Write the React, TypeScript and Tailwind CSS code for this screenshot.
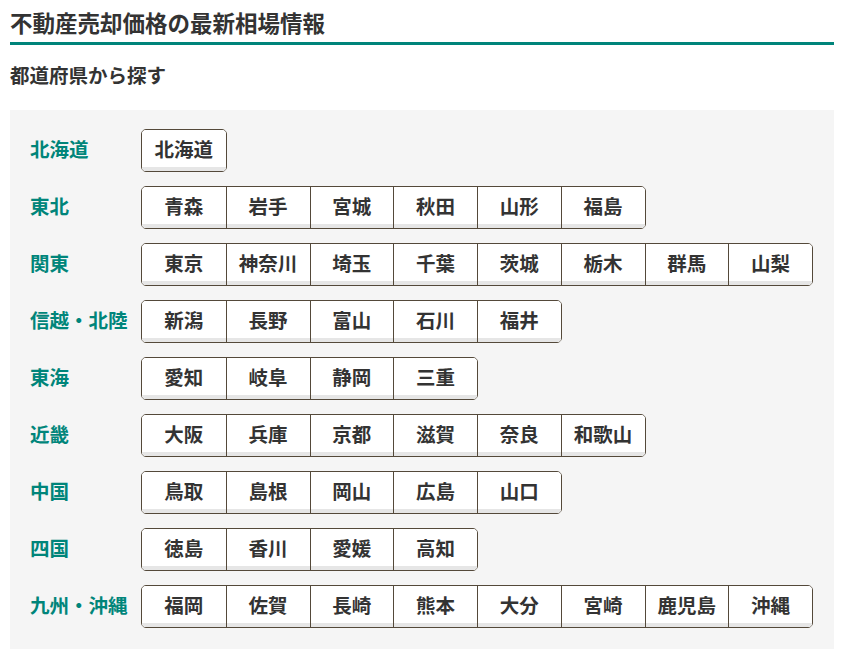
const REGIONS: { name: string; prefs: string[] }[] = [
  { name: "北海道", prefs: ["北海道"] },
  { name: "東北", prefs: ["青森", "岩手", "宮城", "秋田", "山形", "福島"] },
  { name: "関東", prefs: ["東京", "神奈川", "埼玉", "千葉", "茨城", "栃木", "群馬", "山梨"] },
  { name: "信越・北陸", prefs: ["新潟", "長野", "富山", "石川", "福井"] },
  { name: "東海", prefs: ["愛知", "岐阜", "静岡", "三重"] },
  { name: "近畿", prefs: ["大阪", "兵庫", "京都", "滋賀", "奈良", "和歌山"] },
  { name: "中国", prefs: ["鳥取", "島根", "岡山", "広島", "山口"] },
  { name: "四国", prefs: ["徳島", "香川", "愛媛", "高知"] },
  { name: "九州・沖縄", prefs: ["福岡", "佐賀", "長崎", "熊本", "大分", "宮崎", "鹿児島", "沖縄"] },
];

// ─── Component ────────────────────────────────────────────────

export default function App() {
  return (
    <div
      className="w-[846px] h-[649px] overflow-hidden bg-white text-[#333]"
      style={{ fontFamily: '"Noto Sans CJK JP", "Noto Sans", sans-serif' }}
    >
      <div className="pl-[10px] pr-[12px] pt-[7px]">
        {/* ── Title ─────────────────────────────────── */}
        <h1 className="text-[22.5px] leading-[31px] font-bold pb-[4px] border-b-[3px] border-[#00847a]">
          不動産売却価格の最新相場情報
        </h1>

        <h2 className="mt-[18px] text-[19.5px] leading-[24px] font-bold">都道府県から探す</h2>

        {/* ── Region list ───────────────────────────── */}
        <div className="mt-[23px] bg-[#f5f5f5] px-[20px] pt-[19px] pb-[30px] flex flex-col gap-[14px]">
          {REGIONS.map((r) => (
            <div key={r.name} className="flex items-center">
              <div className="w-[111px] pb-[3px] text-[19.5px] font-bold text-[#00857a] leading-none">{r.name}</div>
              <div className="flex border border-[#54493a] rounded-[5px] overflow-hidden bg-white">
                {r.prefs.map((p, i) => (
                  <a
                    key={p}
                    href="#"
                    className={`w-[83.75px] h-[41px] flex items-center justify-center pb-[4px] text-[19.5px] font-bold text-[#333] bg-white shadow-[inset_0_-4px_0_#e6e6e6] ${
                      i > 0 ? "border-l border-[#54493a]" : ""
                    }`}
                  >
                    {p}
                  </a>
                ))}
              </div>
            </div>
          ))}
        </div>
      </div>
    </div>
  );
}
